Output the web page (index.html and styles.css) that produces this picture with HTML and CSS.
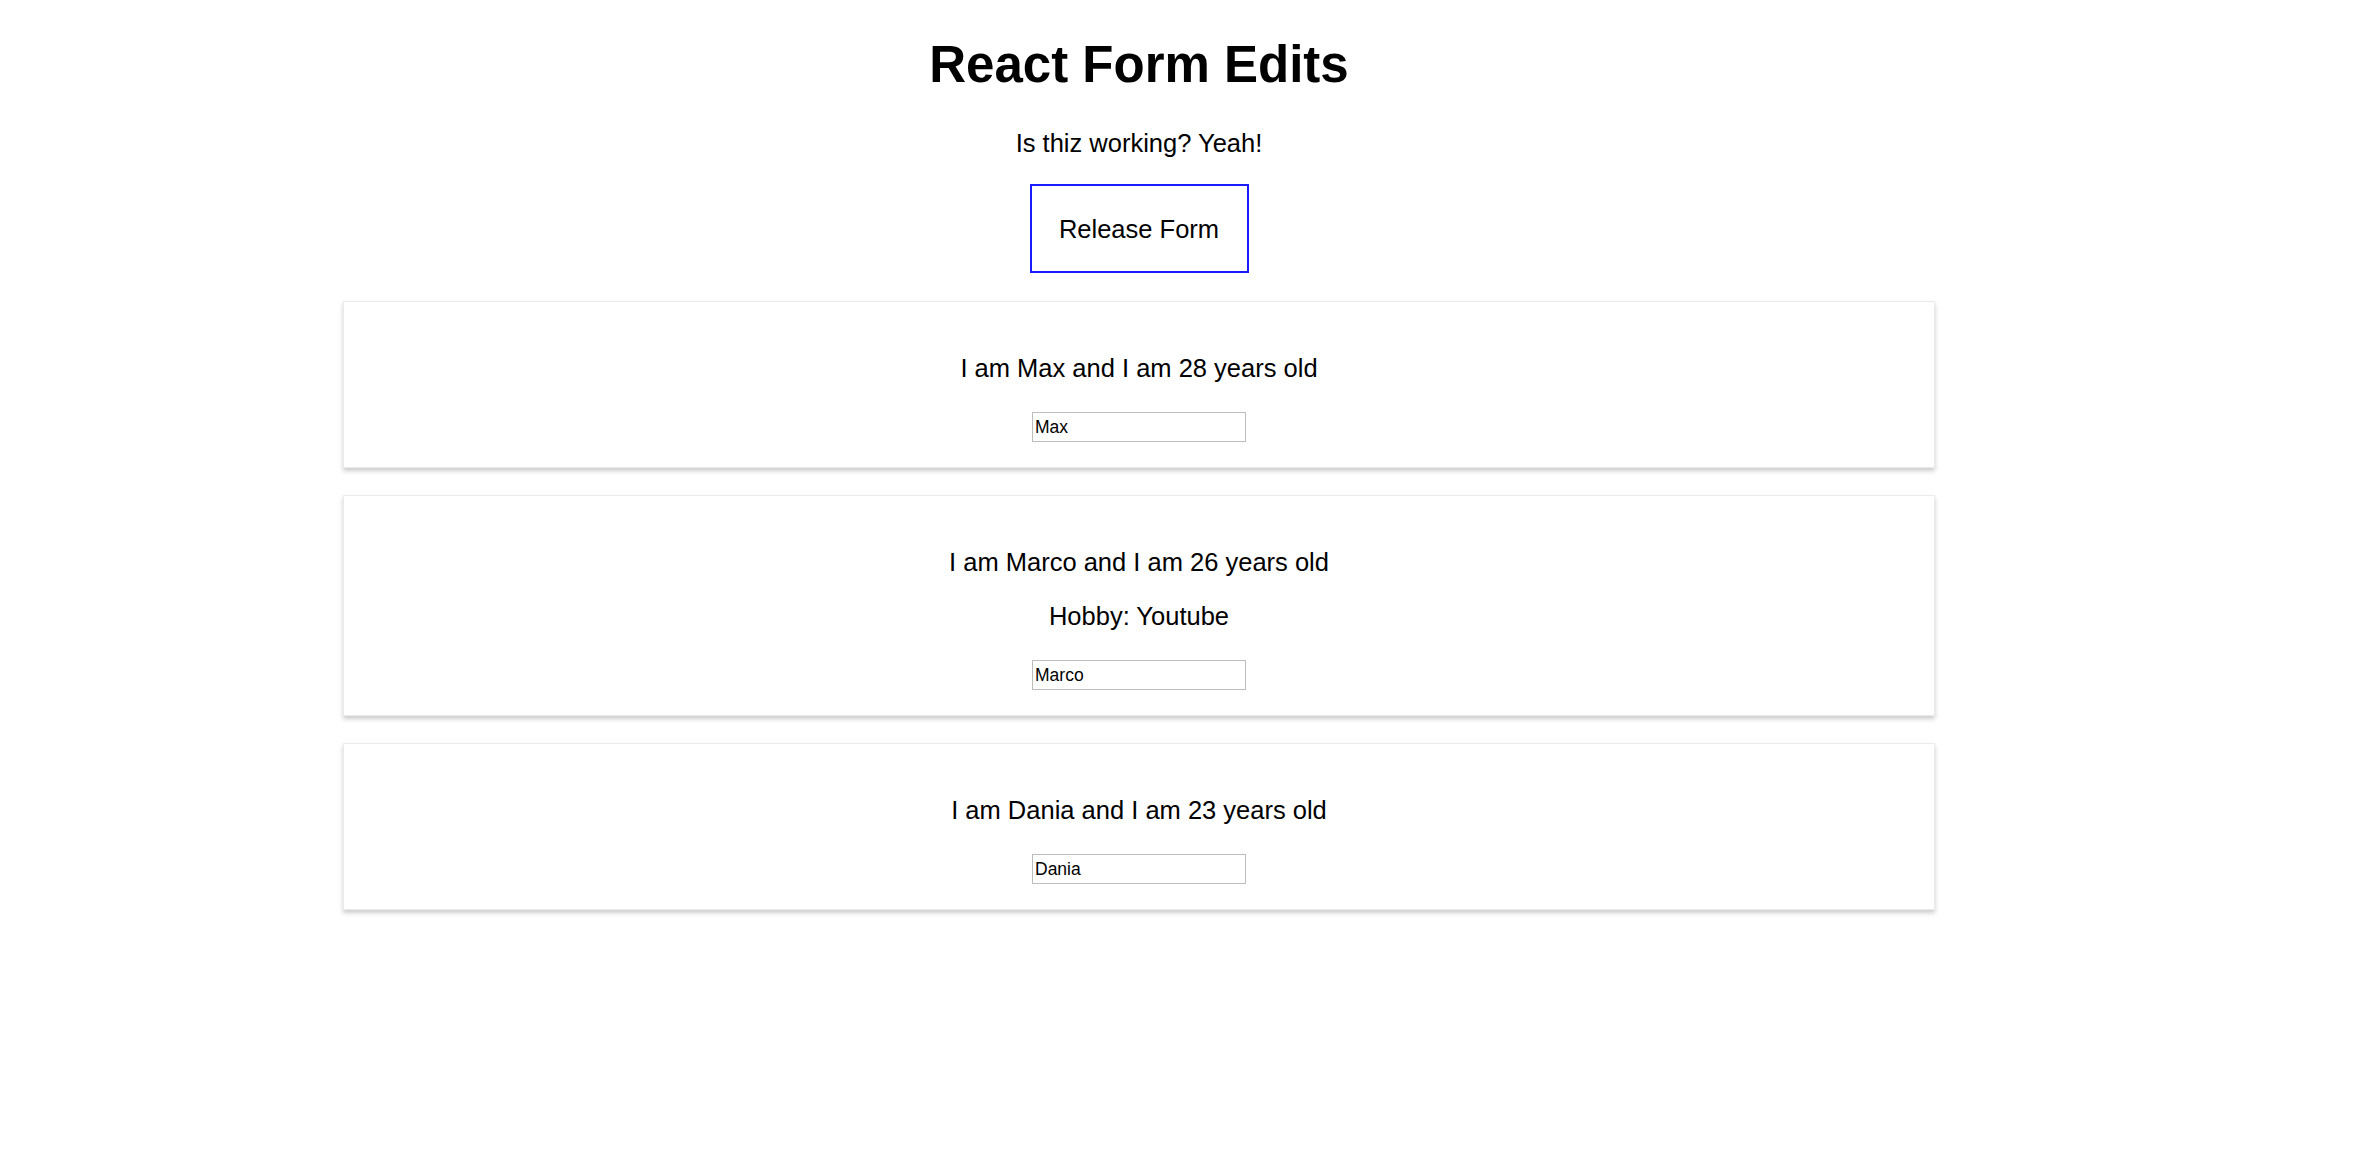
FILE: index.html
```html
<!DOCTYPE html>
<html lang="en">
<head>
<meta charset="utf-8">
<title>React Form Edits</title>
<link rel="stylesheet" href="styles.css">
</head>
<body>
<div class="app">
  <h1 class="title">React Form Edits</h1>
  <p class="subtitle">Is thiz working? Yeah!</p>
  <button class="release-btn" type="button">Release Form</button>
  <div class="persons">
    <div class="person">
      <p class="person-text">I am Max and I am 28 years old</p>
      <input class="person-input" type="text" value="Max">
    </div>
    <div class="person">
      <p class="person-text">I am Marco and I am 26 years old</p>
      <p class="person-text">Hobby: Youtube</p>
      <input class="person-input" type="text" value="Marco">
    </div>
    <div class="person">
      <p class="person-text">I am Dania and I am 23 years old</p>
      <input class="person-input" type="text" value="Dania">
    </div>
  </div>
</div>
</body>
</html>
```

FILE: styles.css
```css
html, body {
  margin: 0;
  padding: 0;
  background: #ffffff;
}

body {
  font-family: "Liberation Sans", Arial, Helvetica, sans-serif;
  color: #000;
}

.app {
  width: 2278px;
  text-align: center;
  font-size: 25.5px;
  padding-bottom: 60px;
}

.title {
  font-size: 51px;
  font-weight: bold;
  line-height: 57px;
  margin: 36px 0 35px;
}

.subtitle {
  font-size: 25.5px;
  line-height: 30px;
  margin: 0 0 26px;
}

.release-btn {
  display: block;
  margin: 0 auto;
  box-sizing: border-box;
  width: 219px;
  height: 89px;
  padding: 0;
  border: 2px solid #1a1aff;
  background: #fff;
  color: #000;
  font-family: "Liberation Sans", Arial, Helvetica, sans-serif;
  font-size: 25.5px;
  line-height: 30px;
  cursor: pointer;
}

.persons {
  display: flex;
  flex-direction: column;
  align-items: center;
  gap: 27px;
  margin-top: 28px;
  padding-bottom: 20px;
}

.person {
  box-sizing: border-box;
  width: 1592px;
  border: 1.5px solid #ebebeb;
  box-shadow: 0 3px 4.5px #cccccc;
  padding: 27px 24px 25px;
  background: #fff;
}

.person-text {
  font-size: 25.5px;
  line-height: 29px;
  margin: 25px 0;
}

.person-input {
  display: block;
  box-sizing: border-box;
  margin: 29px auto 0;
  width: 214px;
  height: 30px;
  padding: 0 2px;
  border: 1.5px solid #bdbdbd;
  border-radius: 0;
  font-family: "Liberation Sans", Arial, Helvetica, sans-serif;
  font-size: 17.5px;
  color: #000;
  background: #fff;
  outline: none;
}
```
